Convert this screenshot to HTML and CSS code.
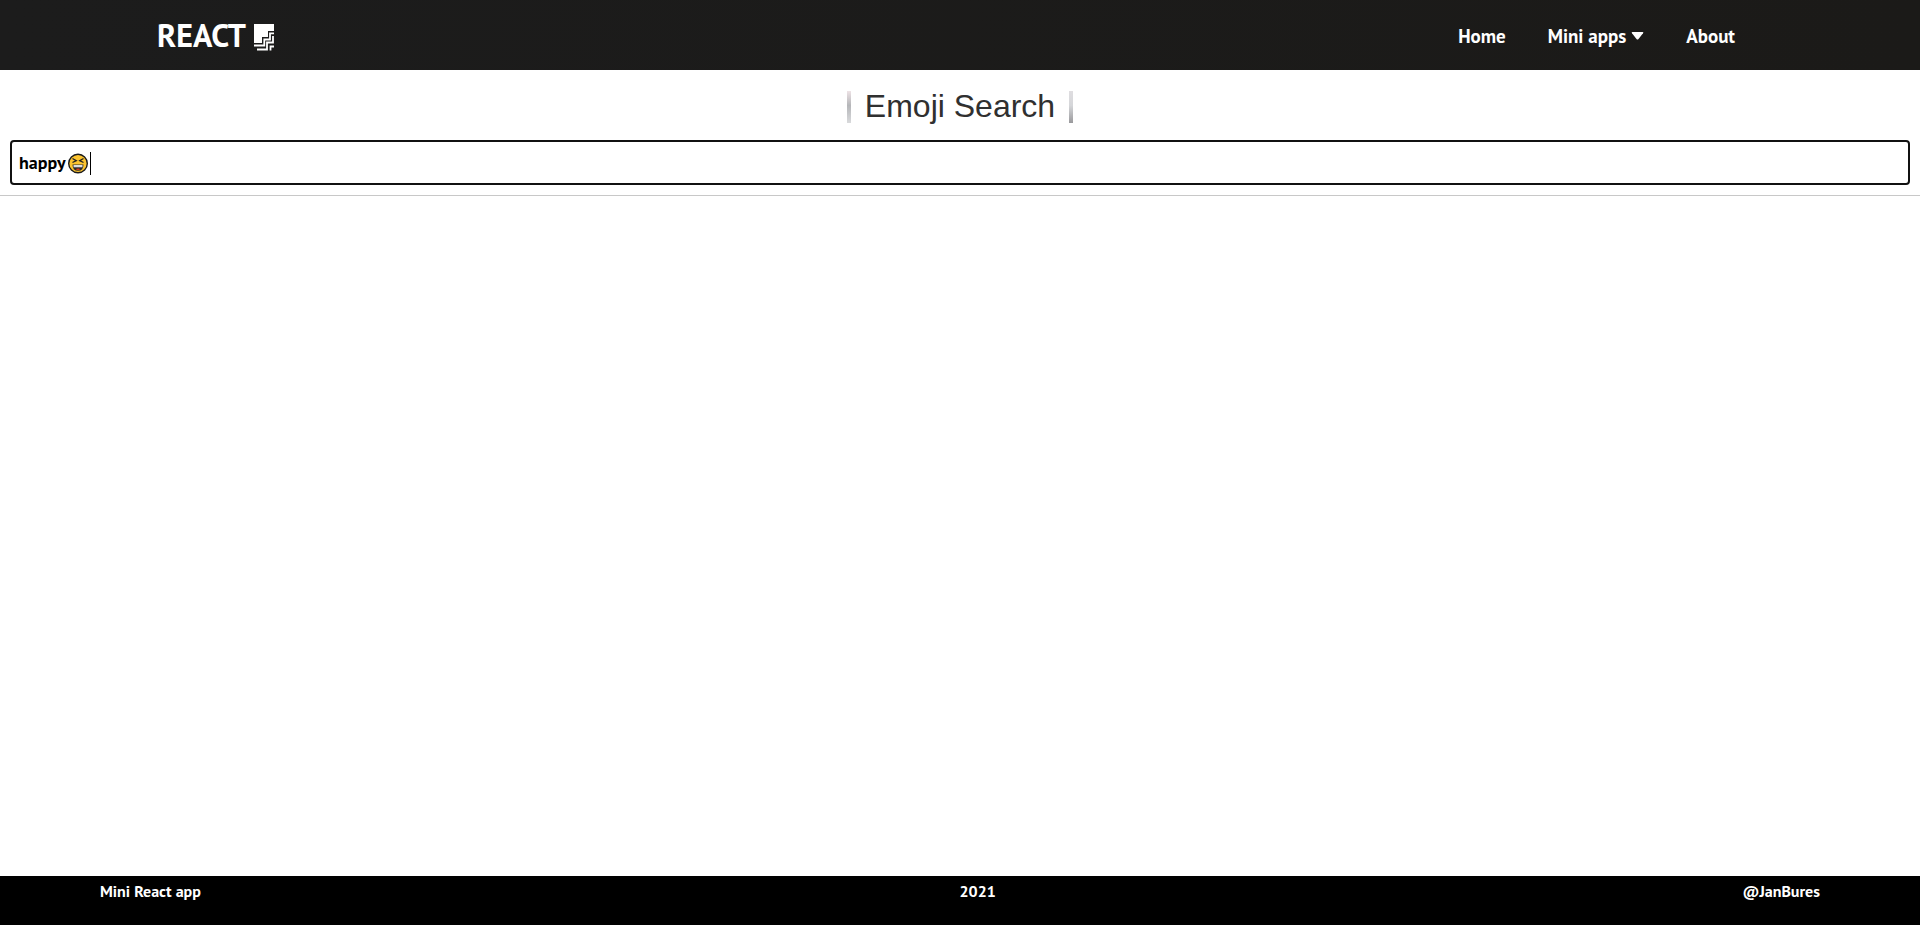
FILE: index.html
```html
<!DOCTYPE html>
<html lang="en">
<head>
<meta charset="utf-8">
<title>Emoji Search</title>
<link rel="stylesheet" href="styles.css">
</head>
<body>
<header class="navbar">
  <a class="logo" href="#">REACT
    <svg class="logo-icon" viewBox="0 0 20 27" aria-hidden="true">
      <path fill="#fff" d="M0 0H20V7H14V13H8V19H0Z"/>
      <g fill="none" stroke="#fff" stroke-width="1.800">
        <path d="M0 21.500H10.300V15.500H16V9.300H20"/>
        <path d="M3 25.500H13V18.500H19V12"/>
        <path d="M16.500 26.500V22.500H20"/>
      </g>
    </svg>
  </a>
  <nav class="nav-menu">
    <a href="#">Home</a>
    <a class="dropdown" href="#">Mini apps
      <svg class="caret-down" viewBox="0 0 12 8" aria-hidden="true"><path fill="#fff" d="M1 0H11Q12.500 0 11.500 1.300L7 7Q6 8 5 7L.5 1.300Q-.5 0 1 0Z"/></svg>
    </a>
    <a href="#">About</a>
  </nav>
</header>
<main class="content">
  <h1 class="title">Emoji Search</h1>
  <div class="search">
    <input class="search-input" type="text" value="happy" aria-label="Search emoji">
    <span class="search-tail">
      <svg class="emoji" viewBox="0 0 20 21" role="img" aria-label="laughing face">
        <circle cx="10" cy="10.500" r="9.300" fill="#fcc42f" stroke="#1b1b1b" stroke-width="1.400"/>
        <path d="M4.500 5.500L8.300 7.700L4.500 9.500M15.500 5.500L11.700 7.700L15.500 9.500" fill="none" stroke="#222" stroke-width="1.300"/>
        <path d="M4.500 11.500H15.500Q15.500 17.800 10 17.800T4.500 11.500Z" fill="#292929"/>
        <path d="M5.500 12H14.500V14.300H5.500Z" fill="#ddd"/>
        <path d="M7.500 16Q10 14.800 12.500 16Q10 18 7.500 16Z" fill="#f03a17"/>
      </svg>
      <span class="text-caret"></span>
    </span>
  </div>
</main>
<footer class="footer">
  <span>Mini React app</span>
  <span class="year">2021</span>
  <span>@JanBures</span>
</footer>
</body>
</html>
```
FILE: styles.css
```css
* { box-sizing: border-box; }
body {
  margin: 0;
  min-height: 100vh;
  display: flex;
  flex-direction: column;
  background: #fff;
  font-family: "PT Sans", "Open Sans", sans-serif;
  font-weight: 700;
}
a { color: #fff; text-decoration: none; }
.navbar {
  height: 70px;
  padding: 0 185px 0 157px;
  display: flex;
  align-items: center;
  justify-content: space-between;
  background: linear-gradient(90deg, #1c1c1c, #1b1a18);
}
.logo {
  display: flex;
  align-items: center;
  gap: 8px;
  font-size: 32px;
}
.logo-icon { width: 20px; height: 27px; margin-top: 4px; }
.nav-menu {
  display: flex;
  gap: 42px;
  padding-top: 2px;
  font-size: 19px;
}
.dropdown { display: flex; align-items: center; gap: 5px; }
.caret-down { width: 13px; height: 8px; }
.content { flex: 1; }
.title {
  width: max-content;
  margin: 21px auto 17px;
  padding: 0 14px 2px;
  border: solid transparent;
  border-width: 0 4px;
  color: #303030;
  font: 400 32px/30px "Liberation Sans", Arial, sans-serif;
  background:
    linear-gradient(#eee3e6, #b5b6b9 45%, #d9dadc) left / 4px 100% no-repeat border-box,
    linear-gradient(#dfdde0, #d5d6d9 45%, #99999c) right / 4px 100% no-repeat border-box;
}
.search {
  position: relative;
  padding: 0 10px 10px;
  border-bottom: 1px solid #c8c8c8;
}
.search-input {
  display: block;
  width: 100%;
  height: 45px;
  padding: 0 7px;
  border: 2px solid #111;
  border-radius: 4px;
  outline: 0;
  background: #fff;
  color: #000;
  font: 700 18px "PT Sans", "Open Sans", sans-serif;
}
.search-tail {
  position: absolute;
  left: 68px;
  top: 12px;
  display: flex;
  align-items: center;
  gap: 2px;
}
.emoji { width: 20px; height: 21px; }
.text-caret { width: 1px; height: 23px; background: #000; }
.footer {
  height: 49px;
  padding: 4px 100px;
  display: flex;
  justify-content: space-between;
  background: #000;
  color: #fff;
  font-size: 16px;
  line-height: 22px;
}
.year { padding-left: 12px; }
```
